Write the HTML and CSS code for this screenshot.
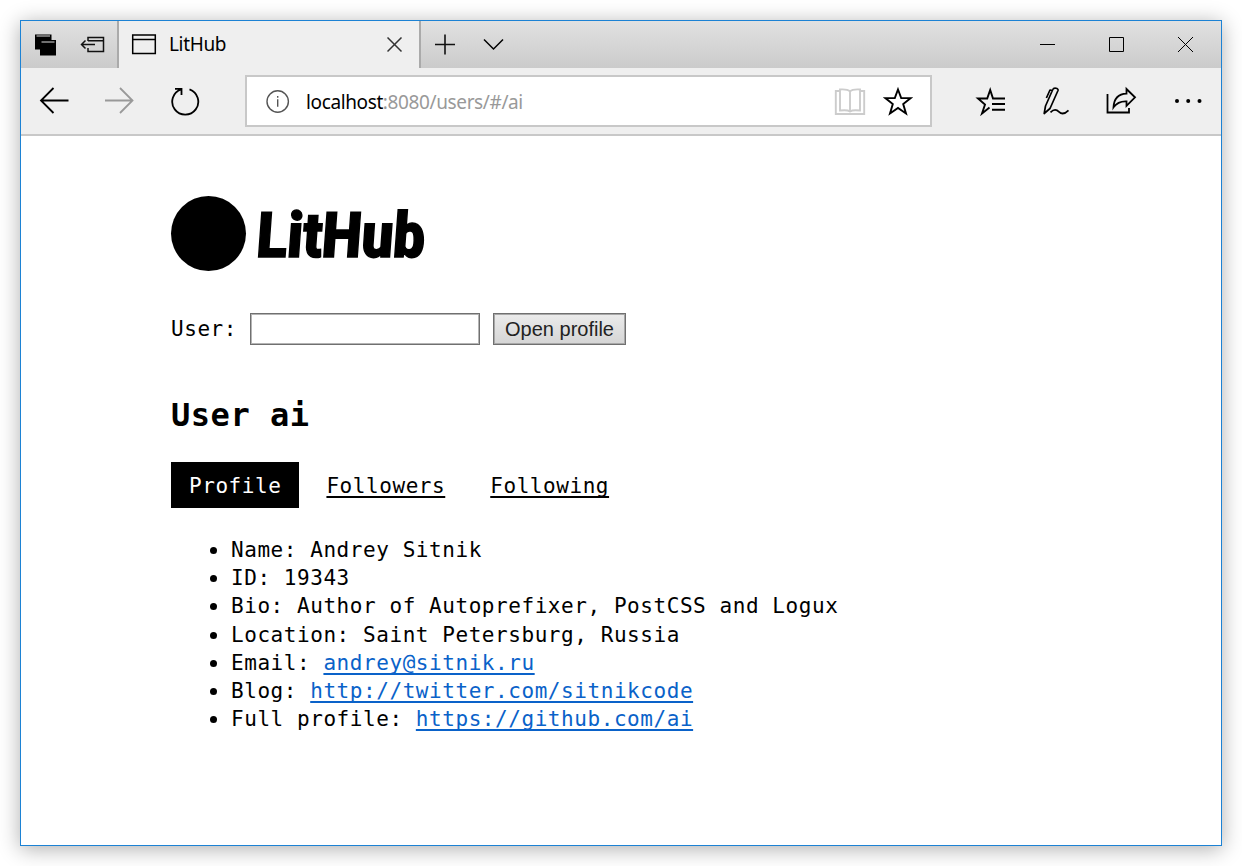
FILE: index.html
```html
<!DOCTYPE html>
<html lang="en">
<head>
<meta charset="utf-8">
<title>LitHub</title>
<link rel="stylesheet" href="styles.css">
</head>
<body>
<div class="window">
  <header class="titlebar">
    <div class="tab-tools">
      <svg width="24" height="24" viewBox="0 0 24 24"><path fill="#000" d="M2 1.500h16.500v5.500h4.500v15.500H7v-6H2z"/><path stroke="#ddd" d="M3.500 3h13.500M8.500 9h13"/></svg>
      <svg class="set-aside" width="26" height="20" viewBox="0 0 26 20" fill="none" stroke="#111" stroke-width="1.500"><path d="M9 6V2.500h15.500v14H9V13M9 5.700h15.500M3 9.500h13M6.500 5.500l-4 4 4 4"/></svg>
    </div>
    <div class="tab">
      <svg width="26" height="22" viewBox="0 0 26 22" fill="none" stroke="#000" stroke-width="1.500"><path d="M1.700 1h22.600v18.600H1.700zM1.700 5.600h22.600"/></svg>
      <span class="tab-title">LitHub</span>
      <svg width="16" height="16" viewBox="0 0 16 16" fill="none" stroke="#333" stroke-width="1.500"><path d="M.5.5l14 14M14.500.5L.5 14.500"/></svg>
    </div>
    <div class="new-tab">
      <svg width="22" height="22" viewBox="0 0 22 22" fill="none" stroke="#111" stroke-width="1.600"><path d="M1 10.500h20M11 .5v20"/></svg>
      <svg width="22" height="14" viewBox="0 0 22 14" fill="none" stroke="#000" stroke-width="1.500"><path d="M1 1.500L10.500 11 20 1.500"/></svg>
    </div>
    <div class="window-buttons">
      <svg width="15" height="15" viewBox="0 0 15 15" stroke="#000"><path d="M0 7.500h15"/></svg>
      <svg width="15" height="15" viewBox="0 0 15 15" fill="none" stroke="#000"><path d="M.5.5h14v14H.5z"/></svg>
      <svg width="15" height="15" viewBox="0 0 15 15" fill="none" stroke="#000"><path d="M0 0l15 15M15 0L0 15"/></svg>
    </div>
  </header>
  <nav class="toolbar">
    <div class="history">
      <svg width="32" height="30" viewBox="0 0 32 30" fill="none" stroke="#000" stroke-width="1.800"><path d="M30.500 14.500H3M15.500 2L3 14.500l12.500 12.500"/></svg>
      <svg width="32" height="30" viewBox="0 0 32 30" fill="none" stroke="#999" stroke-width="1.800"><path d="M1 14.500h28M16 2l12.500 12.500L16 27"/></svg>
      <svg width="30" height="30" viewBox="0 0 30 30" fill="none" stroke="#000" stroke-width="1.800"><path d="M19.500 3.400A13 13 0 1 1 11 3.400M5 2.800h6.500V9"/></svg>
    </div>
    <div class="address">
      <svg width="24" height="24" viewBox="0 0 24 24" fill="none" stroke="#555" stroke-width="1.400"><circle cx="11.700" cy="12.500" r="10.700"/><path d="M11.700 10.300v7.500M11.700 7v1.700"/></svg>
      <span class="url">localhost<span class="url-rest">:8080/users/#/ai</span></span>
      <svg class="book" width="32" height="28" viewBox="0 0 32 28" fill="none" stroke="#ccc" stroke-width="1.900"><path d="M16 4.500C14 2.500 10 2.200 6 2.500v21c4-.5 8-.5 10 1 2-1.500 6-1.500 10-1v-21c-4-.3-8 0-10 2zv20.500M6 4H1.800v23h28.400V4H26"/></svg>
      <svg width="30" height="30" viewBox="0 0 30 30" fill="none" stroke="#000" stroke-width="1.900"><path d="M15 3.500l3.200 8.600h9.500l-7.500 6 2.800 9.400-8-5.500-8 5.500 2.800-9.400-7.500-6h9.500z"/></svg>
    </div>
    <div class="actions">
      <svg width="32" height="30" viewBox="0 0 32 30" fill="none" stroke="#000" stroke-width="1.900"><path d="M30 12.500H18L15.200 4l-3 8.500H3l7 6-3 9 7.500-6M17 18h13M17 23.700h13"/></svg>
      <svg width="28" height="30" viewBox="0 0 28 30" fill="none" stroke="#000" stroke-width="1.700" stroke-linejoin="round"><path d="M2.200 27.500l1.300-7.500L10.800 3.500c.9-2.200 5.900-1.500 5.200 1L8 22.500zM10.500 4.500L8 4l-3.600 8M3 25.500M8.500 26.300c3-3 6-3 8.500-.5s5.500 2.500 9.500-1.500"/></svg>
      <svg width="32" height="30" viewBox="0 0 32 30" fill="none" stroke="#000" stroke-width="1.800"><path d="M2.500 8v18.500h21.500V22M8.500 21.300C9 12.500 13.500 8 21.500 7.700V3l8.500 8.300-8.500 8.500v-4.500c-6.500-.3-10 1.700-13 6z"/></svg>
      <svg width="30" height="6" viewBox="0 0 30 6"><circle cx="5" cy="3" r="2"/><circle cx="16.200" cy="3" r="2"/><circle cx="27.500" cy="3" r="2"/></svg>
    </div>
  </nav>
  <main class="page">
    <div class="logo">
      <div class="logo-disc"></div>
      <svg class="wordmark" width="240" height="75" viewBox="0 0 240 75"><text transform="translate(12.500 61) skewX(5)" x="0" y="0" textLength="168" lengthAdjust="spacingAndGlyphs">LitHub</text></svg>
    </div>
    <form class="search">
      <label for="user">User:</label>
      <input class="field" id="user" type="text">
      <button class="submit" type="button">Open profile</button>
    </form>
    <h1 class="heading">User ai</h1>
    <div class="tabs">
      <a class="link active">Profile</a>
      <a class="link">Followers</a>
      <a class="link">Following</a>
    </div>
    <ul class="info">
      <li>Name: Andrey Sitnik</li>
      <li>ID: 19343</li>
      <li>Bio: Author of Autoprefixer, PostCSS and Logux</li>
      <li>Location: Saint Petersburg, Russia</li>
      <li>Email: <a class="ext">andrey@sitnik.ru</a></li>
      <li>Blog: <a class="ext">http://twitter.com/sitnikcode</a></li>
      <li>Full profile: <a class="ext">https://github.com/ai</a></li>
    </ul>
  </main>
</div>
</body>
</html>
```
FILE: styles.css
```css
* { box-sizing: border-box; }
body {
  margin: 0;
  padding: 20px;
  height: 866px;
  overflow: hidden;
  background: #fff;
  color: #000;
}
svg { display: block; flex: none; }
.window {
  display: flex;
  flex-direction: column;
  height: 826px;
  border: 1px solid #1c82d4;
  background: #fff;
  box-shadow: 0 3px 20px rgba(0, 0, 0, .32);
}
.titlebar {
  display: flex;
  height: 47px;
  background: linear-gradient(#e1e1e1, #cbcbcb);
}
.tab-tools {
  display: flex;
  align-items: center;
  width: 98px;
  padding-left: 12px;
  gap: 22px;
  border-right: 2px solid #aaa;
}
.tab {
  display: flex;
  align-items: center;
  width: 300px;
  padding: 0 16px 0 12px;
  background: #efefef;
  font: 19px "Noto Sans", sans-serif;
}
.tab-title { flex: 1; margin-left: 12px; padding-bottom: 2px; letter-spacing: -.35px; }
.new-tab {
  display: flex;
  align-items: center;
  gap: 27px;
  padding-left: 13px;
  border-left: 2px solid #aaa;
}
.window-buttons {
  display: flex;
  align-items: center;
  gap: 54px;
  margin-left: auto;
  padding-right: 28px;
}
.toolbar {
  display: flex;
  align-items: center;
  height: 68px;
  background: #efefef;
  border-bottom: 2px solid #c8c8c8;
}
.history {
  display: flex;
  align-items: center;
  width: 224px;
  padding-left: 17px;
  gap: 34px;
}
.address {
  display: flex;
  align-items: center;
  width: 687px;
  height: 52px;
  padding: 0 17px 0 19px;
  border: 2px solid #c8c8c8;
  background: #fff;
  font: 19px "Noto Sans", sans-serif;
}
.url { flex: 1; margin-left: 16px; padding-top: 1px; letter-spacing: -.38px; }
.url-rest { color: #999; }
.book { margin-right: 17px; }
.actions {
  display: flex;
  align-items: center;
  padding-left: 43px;
  gap: 35px;
}
.page {
  padding: 60px 150px 0;
  font: 21px/28.125px "DejaVu Sans Mono", monospace;
  letter-spacing: .56px;
}
.logo { display: flex; }
.logo-disc { width: 75px; height: 75px; border-radius: 50%; background: #000; }
.wordmark {
  font: italic 900 63px Roboto, sans-serif;
  letter-spacing: 0;
  stroke: #000;
  stroke-width: 1.500px;
}
.search { display: flex; align-items: center; height: 32px; margin-top: 42px; }
.field {
  width: 230px;
  height: 32px;
  margin: 0 13px 0 13px;
  border: 1px solid #707070;
  background: #fff;
  box-shadow: inset 0 0 0 1px #b4b4b4;
}
.submit {
  width: 133px;
  height: 32px;
  padding: 0;
  border: 1px solid #707070;
  background: linear-gradient(#ebebeb, #d5d5d5);
  box-shadow: inset 0 0 0 1px #a8a8a8;
  color: #222;
  font: 20px "Liberation Sans", sans-serif;
  white-space: nowrap;
}
.heading {
  margin: 50px 0 0;
  font-size: 32px;
  line-height: 40px;
  letter-spacing: .54px;
}
.tabs { display: flex; margin-top: 27px; }
.link {
  padding: 10px 18px 8px;
  margin-right: 9px;
  text-decoration: underline;
  text-decoration-thickness: 2px;
  text-underline-offset: 3px;
  text-decoration-skip-ink: none;
}
.active { background: #000; color: #fff; text-decoration: none; }
.info { margin: 28px 0 0; padding-left: 60px; }
.info li::marker { font-size: 24px; line-height: 1; }
.ext {
  color: #0a62c9;
  text-decoration: underline;
  text-decoration-thickness: 2px;
  text-underline-offset: 3px;
  text-decoration-skip-ink: none;
}
```
